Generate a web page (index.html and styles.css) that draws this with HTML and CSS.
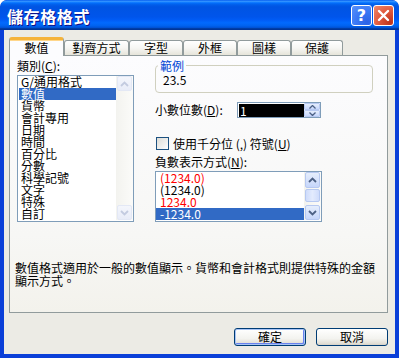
FILE: index.html
```html
<!DOCTYPE html>
<html lang="zh-Hant">
<head>
<meta charset="utf-8">
<title>儲存格格式</title>
<link rel="stylesheet" href="styles.css">
</head>
<body>
<div class="window">
  <div class="titlebar">
    <span class="title">儲存格格式</span>
    <div class="tb-buttons">
      <span class="tb-btn help">?</span>
      <span class="tb-btn close"><svg width="13" height="13" viewBox="0 0 13 13"><path d="M2 2 L11 11 M11 2 L2 11" stroke="#fff" stroke-width="2.4" stroke-linecap="round"/></svg></span>
    </div>
  </div>
  <div class="client">
    <div class="tabs">
      <div class="tab active w55">數值</div>
      <div class="tab w65">對齊方式</div>
      <div class="tab w54">字型</div>
      <div class="tab w54">外框</div>
      <div class="tab w54">圖樣</div>
      <div class="tab w52">保護</div>
    </div>
    <div class="panel">
      <div class="cols">
        <div class="col-left">
          <div class="lbl">類別(<u>C</u>):</div>
          <div class="listbox cat">
            <div class="items">
              <div class="item">G/通用格式</div>
              <div class="item sel">數值</div>
              <div class="item">貨幣</div>
              <div class="item">會計專用</div>
              <div class="item">日期</div>
              <div class="item">時間</div>
              <div class="item">百分比</div>
              <div class="item">分數</div>
              <div class="item">科學記號</div>
              <div class="item">文字</div>
              <div class="item">特殊</div>
              <div class="item">自訂</div>
            </div>
            <div class="scroll disabled">
              <span class="sbtn"><svg width="9" height="6" viewBox="0 0 9 6"><path d="M1 5 L4.5 1.5 L8 5" fill="none" stroke-width="1.8"/></svg></span>
              <span class="track"></span>
              <span class="sbtn"><svg width="9" height="6" viewBox="0 0 9 6"><path d="M1 1 L4.5 4.5 L8 1" fill="none" stroke-width="1.8"/></svg></span>
            </div>
          </div>
        </div>
        <div class="col-right">
          <fieldset class="sample">
            <legend>範例</legend>
            <div class="sample-val">23.5</div>
          </fieldset>
          <div class="dec-row">
            <span class="dec-label">小數位數(<u>D</u>):</span>
            <div class="spinner">
              <div class="spin-field">1</div>
              <div class="spin-btns">
                <span class="spb"><svg width="7" height="4" viewBox="0 0 7 4"><path d="M0.5 3.5 L3.5 0.5 L6.5 3.5" fill="none" stroke="#4d6185" stroke-width="1.3"/></svg></span>
                <span class="spb"><svg width="7" height="4" viewBox="0 0 7 4"><path d="M0.5 0.5 L3.5 3.5 L6.5 0.5" fill="none" stroke="#4d6185" stroke-width="1.3"/></svg></span>
              </div>
            </div>
          </div>
          <div class="check-row">
            <span class="checkbox"></span>
            <span class="check-label">使用千分位 (,) 符號(<u>U</u>)</span>
          </div>
          <div class="lbl neg-lbl">負數表示方式(<u>N</u>):</div>
          <div class="listbox neg">
            <div class="items">
              <div class="item red">(1234.0)</div>
              <div class="item">(1234.0)</div>
              <div class="item red">1234.0</div>
              <div class="item sel">-1234.0</div>
            </div>
            <div class="scroll">
              <span class="sbtn"><svg width="9" height="6" viewBox="0 0 9 6"><path d="M1 5 L4.5 1.5 L8 5" fill="none" stroke-width="1.8"/></svg></span>
              <span class="thumb"></span>
              <span class="sbtn"><svg width="9" height="6" viewBox="0 0 9 6"><path d="M1 1 L4.5 4.5 L8 1" fill="none" stroke-width="1.8"/></svg></span>
            </div>
          </div>
        </div>
      </div>
      <p class="desc">數值格式適用於一般的數值顯示。貨幣和會計格式則提供特殊的金額顯示方式。</p>
    </div>
    <div class="buttons">
      <button class="btn default">確定</button>
      <button class="btn">取消</button>
    </div>
  </div>
</div>
</body>
</html>
```
FILE: styles.css
```css
* { box-sizing: border-box; }
html, body { margin: 0; padding: 0; background: #ffffff; }
body {
  font-family: "Noto Sans CJK TC", "Noto Sans CJK SC", sans-serif;
  font-size: 12px;
  color: #000;
}
u { text-decoration: underline; text-underline-offset: 1px; }

.window {
  width: 399px;
  height: 358px;
  background: #0a3fd8;
  border-radius: 7px 7px 0 0;
  display: flex;
  flex-direction: column;
  padding: 0 4px 4px;
  overflow: hidden;
}
.titlebar {
  height: 30px;
  margin: 0 -4px;
  padding: 0 5px 0 7px;
  display: flex;
  align-items: center;
  justify-content: space-between;
  border-radius: 7px 7px 0 0;
  background: linear-gradient(to bottom, #0058ee 0%, #3593ff 4%, #288eff 6%, #127dff 8%, #036ffc 10%, #0262ee 14%, #0057e5 20%, #0054e3 24%, #0055eb 56%, #005bf5 66%, #026afe 76%, #0062ef 86%, #0052d6 92%, #0040ab 94%, #003092 100%);
}
.title {
  color: #fff;
  font-weight: bold;
  font-size: 16px;
  letter-spacing: 0.6px;
  line-height: 18px;
  text-shadow: 1px 1px #0f1089;
  margin-top: 1px;
}
.tb-buttons { display: flex; gap: 1px; align-items: center; }
.tb-btn {
  width: 21px;
  height: 21px;
  border: 1px solid #fff;
  border-radius: 3px;
  display: flex;
  align-items: center;
  justify-content: center;
  color: #fff;
}
.help {
  background: radial-gradient(circle at 80% 85%, #2d62e6 0%, #3a78f5 50%, #5a92fb 100%);
  font-family: "DejaVu Sans", sans-serif;
  font-weight: bold;
  font-size: 16px;
  line-height: 19px;
}
.close {
  background: radial-gradient(circle at 85% 85%, #c0341b 0%, #e0583c 50%, #ef8a6d 100%);
}

.client {
  flex: 1;
  background: #ecebe5;
  padding: 7px 7px 0 5px;
  display: flex;
  flex-direction: column;
}
.tabs {
  display: flex;
  align-items: flex-end;
  height: 19px;
  margin-bottom: -1px;
  position: relative;
  z-index: 2;
}
.tab {
  height: 15px;
  margin-bottom: 1px;
  border: 1px solid #919b9c;
  border-bottom: none;
  border-radius: 3px 3px 0 0;
  background: linear-gradient(to bottom, #ffffff 0%, #f6f6f3 50%, #e6e4da 100%);
  text-align: center;
  line-height: 13px;
  white-space: nowrap;
}
.tab.active {
  height: 19px;
  margin-bottom: 0;
  border-top: 3px solid #f5b33b;
  box-shadow: inset 0 1px 0 #ffd68a;
  background: #fcfcfe;
  line-height: 15px;
  padding-top: 0;
}
.w55 { width: 55px; }
.w65 { width: 65px; }
.w54 { width: 54px; }
.w52 { width: 52px; }

.panel {
  width: 379px;
  height: 258px;
  border: 1px solid #919b9c;
  background: linear-gradient(to bottom, #fcfcfe 0%, #f7f7f5 70%, #f3f2ec 100%);
  padding-top: 3px;
  position: relative;
  z-index: 1;
}
.cols {
  display: flex;
  gap: 21px;
  margin-left: 7px;
}
.col-left { width: 117px; }
.col-right { width: 218px; }
.lbl { line-height: 14px; height: 14px; white-space: nowrap; }

.listbox {
  border: 1px solid #7f9db9;
  background: #fff;
  display: flex;
  padding-bottom: 1px;
}
.listbox.cat { margin-top: 2px; height: 147px; }
.listbox .items { flex: 1; }
.item {
  height: 12px;
  line-height: 12px;
  white-space: nowrap;
  margin-left: 1px;
  padding-left: 2px;
}
.item.sel { background: #316ac5; color: #fff; }
.item.red { color: #ff0000; }
.neg .item { margin-left: 0; padding-left: 4px; }

.scroll {
  width: 17px;
  display: flex;
  flex-direction: column;
  align-items: center;
  background: linear-gradient(to right, #f3f3ef, #fbfbf9);
  gap: 1px;
}
.sbtn {
  width: 15px;
  height: 15px;
  border: 1px solid #b7c9f1;
  border-radius: 2px;
  background: linear-gradient(to bottom, #e6eefc 0%, #c6d6fb 100%);
  display: flex;
  align-items: center;
  justify-content: center;
}
.sbtn svg path { stroke: #4d6185; }
.scroll .track { flex: 1; }
.scroll.disabled .sbtn {
  border-color: #e3e8f5;
  background: linear-gradient(to bottom, #f4f6fc 0%, #e8ecf8 100%);
}
.scroll.disabled .sbtn svg path { stroke: #c3cbe0; }
.thumb {
  width: 15px;
  height: 13px;
  border: 1px solid #b7c9f1;
  border-radius: 2px;
  background: linear-gradient(to right, #cfdcfb 0%, #e3ebfd 50%, #cfdcfb 100%);
  margin-bottom: auto;
}
.neg .scroll { justify-content: space-between; }
.neg .scroll .sbtn:first-child { height: 16px; }

.sample {
  margin: 0;
  padding: 1px 7px 5px;
  border: 1px solid #d0d0bf;
  border-radius: 4px;
  min-width: 0;
  width: 218px;
}
.sample legend {
  color: #0046d5;
  line-height: 13px;
  padding: 0 2px;
  margin-left: -5px;
}
.sample-val { line-height: 14px; }

.dec-row {
  margin-top: 9px;
  display: flex;
  align-items: center;
  height: 16px;
}
.dec-label { width: 82px; line-height: 14px; white-space: nowrap; }
.spinner {
  width: 84px;
  height: 16px;
  border: 1px solid #7f9db9;
  background: #fff;
  padding: 1px 0 0 1px;
  display: flex;
}
.spin-field {
  flex: 1;
  background: #000;
  color: #fff;
  line-height: 13px;
  padding-left: 1px;
  height: 13px;
}
.spin-btns {
  width: 16px;
  display: flex;
  flex-direction: column;
  margin-top: -1px;
  gap: 0;
}
.spb {
  height: 7px;
  border: 1px solid #b7c9f1;
  border-radius: 1px;
  background: linear-gradient(to bottom, #e6eefc, #c6d6fb);
  display: flex;
  align-items: center;
  justify-content: center;
}

.check-row {
  margin-top: 19px;
  display: flex;
  align-items: center;
  height: 13px;
}
.checkbox {
  width: 13px;
  height: 13px;
  margin-left: 1px;
  border: 1px solid #1c5180;
  background: linear-gradient(135deg, #dcdcd7 0%, #f0f0ee 60%, #ffffff 100%);
  margin-right: 4px;
}
.check-label { line-height: 13px; white-space: nowrap; }
.neg-lbl { margin-top: 5px; }
.listbox.neg { margin-top: 2px; height: 51px; width: 167px; }

.desc {
  margin: 39px 0 0 5px;
  width: 365px;
  line-height: 13px;
}

.buttons {
  margin-top: 15px;
  display: flex;
  justify-content: flex-end;
  gap: 10px;
}
.btn {
  width: 72px;
  height: 18px;
  border: 1px solid #003c74;
  border-radius: 3px;
  background: linear-gradient(to bottom, #ffffff 0%, #f3f3ef 60%, #e2dfd6 90%, #d6d0c5 100%);
  font-family: inherit;
  font-size: 12px;
  line-height: 14px;
  padding: 0;
  color: #000;
}
.btn.default {
  box-shadow: inset 0 0 0 1px #a8c4f6, inset -1px -1px 0 1px #6982ee;
}
```
